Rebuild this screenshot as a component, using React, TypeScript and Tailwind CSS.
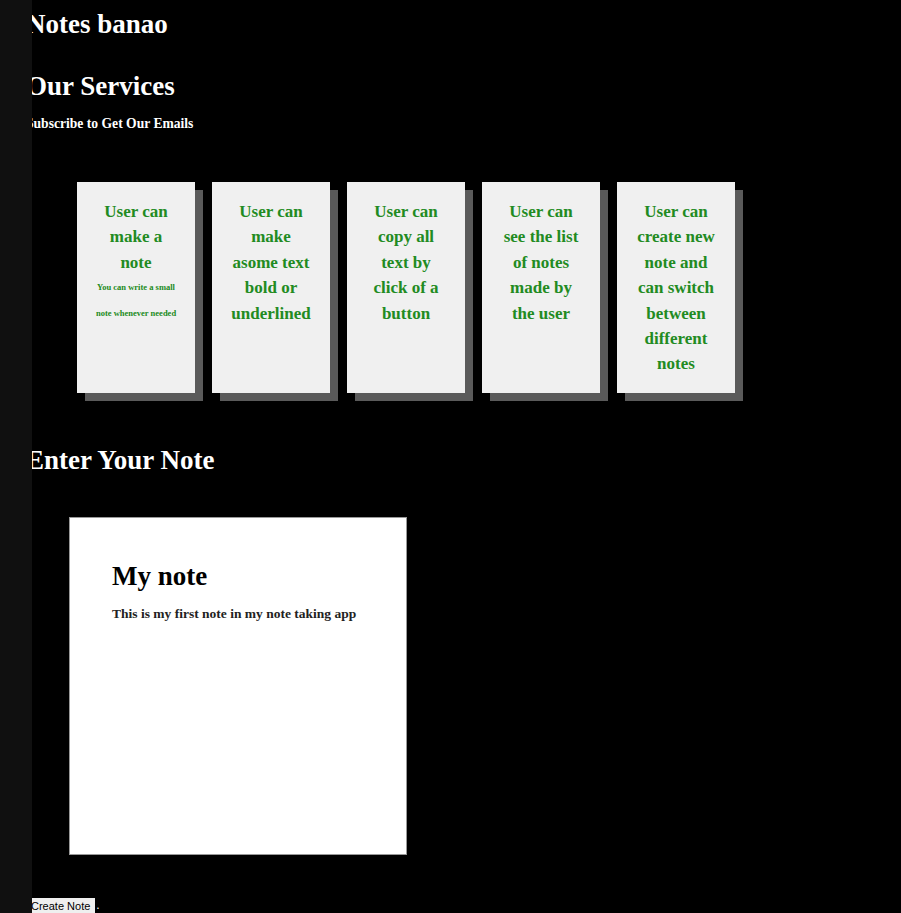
import React from "react";

const cards: { main: string; sub?: string[] }[] = [
  { main: "User can make a note", sub: ["You can write a small", "note whenever needed"] },
  { main: "User can make asome text bold or underlined" },
  { main: "User can copy all text by click of a button" },
  { main: "User can see the list of notes made by the user" },
  { main: "User can create new note and can switch between different notes" },
];

export default function App() {
  return (
    <div className="relative min-h-screen overflow-hidden bg-black pl-[26px] font-['Liberation_Serif',serif] text-white">
      <div className="absolute left-0 top-0 bottom-0 z-10 w-[32px] bg-[#101010]" />
      <h1 className="pt-[9px] text-[27px] font-bold leading-[31px]">Notes banao</h1>
      <h1 className="mt-[31px] text-[27px] font-bold leading-[31px]">Our Services</h1>
      <h4 className="mt-[14px] text-[13.6px] font-bold leading-[16px]">Subscribe to Get Our Emails</h4>
      <div className="mt-[50px] flex gap-[17px] pl-[51px]">
        {cards.map((c, i) => (
          <div
            key={i}
            className="h-[211px] w-[118px] shrink-0 bg-[#f0f0f0] px-[19px] pt-[17px] text-center text-[17px] font-bold leading-[25.4px] text-[#228b22] shadow-[8px_8px_0_#5a5a5a]"
          >
            <div>{c.main}</div>
            {c.sub && (
              <div className="text-[8.5px] leading-[25.4px]">
                {c.sub.map((s, j) => (
                  <div key={j} className="whitespace-nowrap">{s}</div>
                ))}
              </div>
            )}
          </div>
        ))}
      </div>
      <h1 className="mt-[52px] text-[27px] font-bold leading-[31px]">Enter Your Note</h1>
      <div className="ml-[43px] mt-[41px] h-[338px] w-[338px] border border-[#999] bg-white pl-[42px] pt-[43px] text-black">
        <h1 className="text-[27px] font-bold leading-[31px]">My note</h1>
        <h3 className="mt-[14px] text-[13.5px] font-bold leading-[16px] text-[#222]">
          This is my first note in my note taking app
        </h3>
      </div>
      <div className="mt-[43px] flex items-start">
        <button className="h-[17px] bg-[#efefef] px-[5px] font-['Liberation_Sans',sans-serif] text-[11px] leading-[17px] text-black">
          Create Note
        </button>
        <span className="ml-[1px] font-['Liberation_Sans',sans-serif] text-[12px] leading-[14px] text-white">.</span>
      </div>
    </div>
  );
}
